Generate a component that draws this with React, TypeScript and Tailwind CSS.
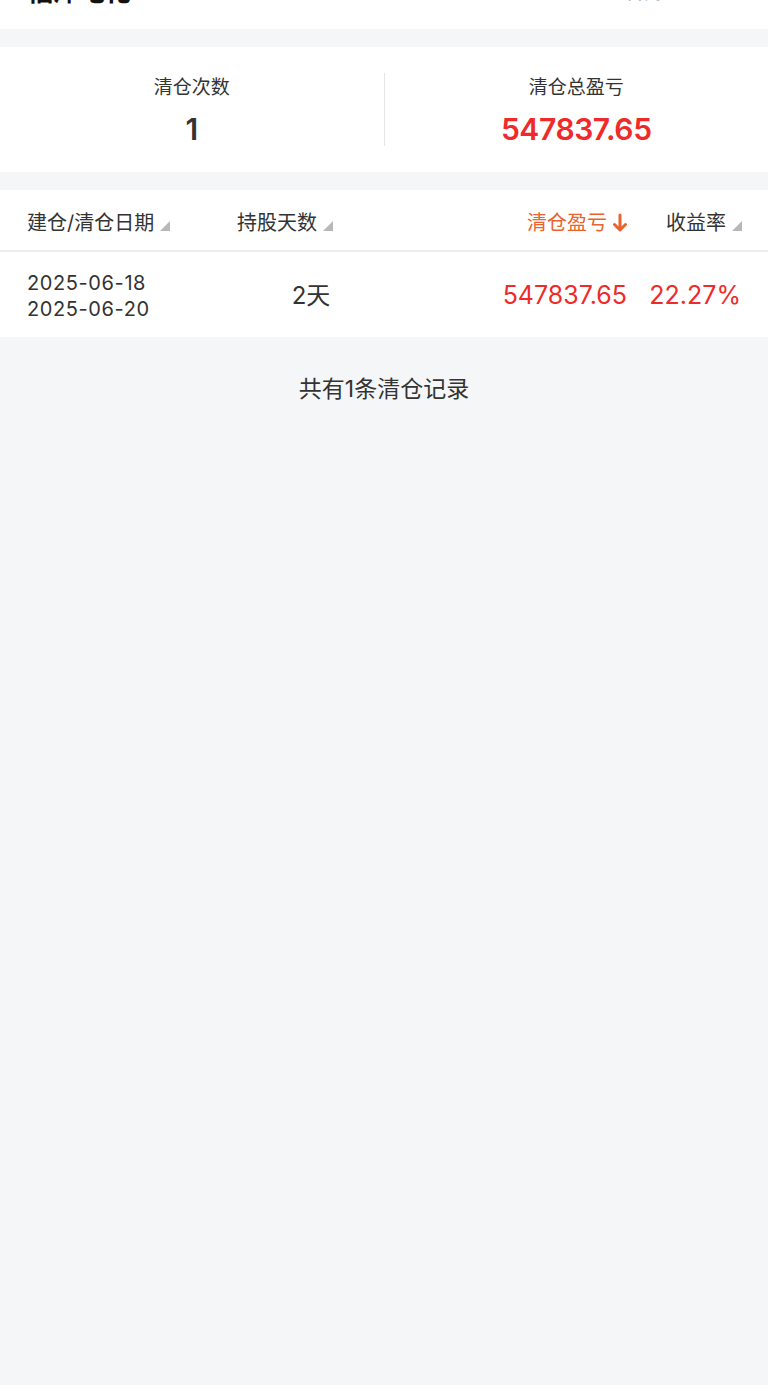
import React from "react";

const FONT = { fontFamily: 'Inter, "Noto Sans CJK SC", sans-serif' };

function Tri() {
  return (
    <svg width="10" height="10" viewBox="0 0 10 10" className="ml-[6px] mt-[6px]">
      <polygon points="10,0 10,10 0,10" fill="#b8b8b8" />
    </svg>
  );
}

function Arrow() {
  return (
    <svg width="16" height="20" viewBox="0 0 16 20" className="ml-[5px]">
      <path d="M8 2 V17 M2.5 11.5 L8 17 L13.5 11.5" stroke="#e8642c" strokeWidth="3" fill="none" strokeLinecap="round" strokeLinejoin="round" />
    </svg>
  );
}

export default function App() {
  return (
    <div className="min-h-[1385px] w-[768px] bg-[#f5f6f8]" style={FONT}>
      <div className="h-[29px] bg-white overflow-hidden">
        <div className="flex justify-between items-center px-[27px] -mt-[21px]">
          <span className="text-[26px] font-bold text-[#111] leading-[26px]">福泽电化</span>
          <span className="text-[20px] text-[#999] leading-[26px] mr-[44px]">查看持仓 ›</span>
        </div>
      </div>
      <div className="h-[18px]" />
      <div className="h-[125px] bg-white flex items-center">
        <div className="flex-1 flex flex-col items-center pt-[2px]">
          <div className="text-[19px] text-[#333] leading-[26px]">清仓次数</div>
          <div className="text-[30px] font-semibold text-[#333] leading-[36px] mt-[10px]">1</div>
        </div>
        <div className="w-px h-[73px] bg-[#e6e6e6]" />
        <div className="flex-1 flex flex-col items-center pt-[2px]">
          <div className="text-[19px] text-[#333] leading-[26px]">清仓总盈亏</div>
          <div className="text-[30px] font-semibold text-[#ee2a2a] leading-[36px] mt-[10px] tracking-[-0.4px]">547837.65</div>
        </div>
      </div>
      <div className="h-[18px]" />
      <div className="bg-white h-[62px] flex items-center pt-[6px] pl-[27px] pr-[26px] border-b-2 border-[#ececec] text-[20px] text-[#333]">
        <div className="w-[210px] flex items-center">建仓/清仓日期<Tri /></div>
        <div className="w-[150px] flex items-center">持股天数<Tri /></div>
        <div className="flex-1 flex items-center justify-end text-[#e8642c]">清仓盈亏<Arrow /></div>
        <div className="w-[114px] flex items-center justify-end">收益率<Tri /></div>
      </div>
      <div className="bg-white h-[85px] flex items-center pt-[2px] pl-[27px] pr-[27px] text-[#333]">
        <div className="w-[210px] text-[20px] leading-[26px] tracking-[0.6px]">
          <div>2025-06-18</div>
          <div>2025-06-20</div>
        </div>
        <div className="w-[148px] text-center text-[24px]">2天</div>
        <div className="flex-1 text-right text-[25px] text-[#ee2a2a]">547837.65</div>
        <div className="w-[114px] text-right text-[25px] text-[#ee2a2a]">22.27%</div>
      </div>
      <div className="text-center text-[23px] text-[#333] mt-[37px] leading-[30px]">共有1条清仓记录</div>
    </div>
  );
}
